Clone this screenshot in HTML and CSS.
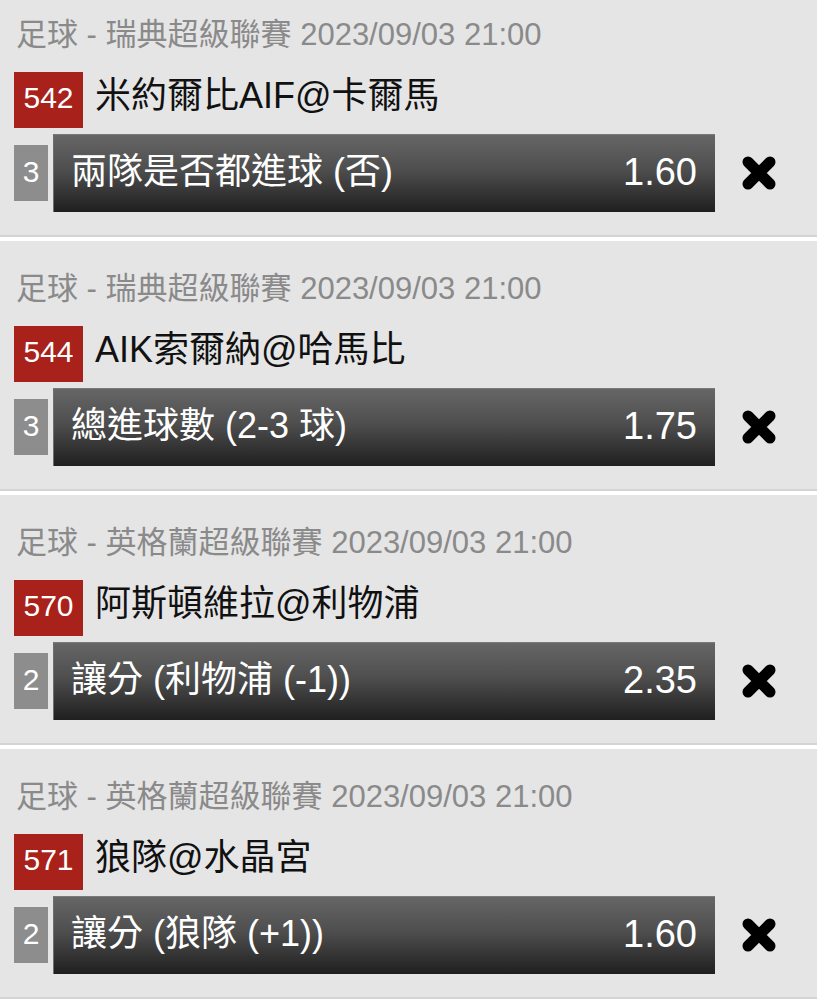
FILE: index.html
```html
<!DOCTYPE html>
<html lang="zh-Hant">
<head>
  <meta charset="UTF-8">
  <title>投注單</title>
  <link rel="stylesheet" href="styles.css">
</head>
<body>

  <div class="slip">

    <div class="bet">
      <div class="bet-head">足球 - 瑞典超級聯賽 2023/09/03 21:00</div>
      <div class="match">
        <span class="match-no">542</span>
        <span class="match-name">米約爾比AIF@卡爾馬</span>
      </div>
      <div class="pick">
        <span class="legs">3</span>
        <div class="pick-bar">
          <span class="pick-name">兩隊是否都進球 (否)</span>
          <span class="odds">1.60</span>
        </div>
        <button class="remove" aria-label="移除">
          <svg viewBox="0 0 36 36" width="36" height="36"><path d="M7 7 L29 29 M29 7 L7 29" /></svg>
        </button>
      </div>
    </div>

    <div class="bet">
      <div class="bet-head">足球 - 瑞典超級聯賽 2023/09/03 21:00</div>
      <div class="match">
        <span class="match-no">544</span>
        <span class="match-name">AIK索爾納@哈馬比</span>
      </div>
      <div class="pick">
        <span class="legs">3</span>
        <div class="pick-bar">
          <span class="pick-name">總進球數 (2-3 球)</span>
          <span class="odds">1.75</span>
        </div>
        <button class="remove" aria-label="移除">
          <svg viewBox="0 0 36 36" width="36" height="36"><path d="M7 7 L29 29 M29 7 L7 29" /></svg>
        </button>
      </div>
    </div>

    <div class="bet">
      <div class="bet-head">足球 - 英格蘭超級聯賽 2023/09/03 21:00</div>
      <div class="match">
        <span class="match-no">570</span>
        <span class="match-name">阿斯頓維拉@利物浦</span>
      </div>
      <div class="pick">
        <span class="legs">2</span>
        <div class="pick-bar">
          <span class="pick-name">讓分 (利物浦 (-1))</span>
          <span class="odds">2.35</span>
        </div>
        <button class="remove" aria-label="移除">
          <svg viewBox="0 0 36 36" width="36" height="36"><path d="M7 7 L29 29 M29 7 L7 29" /></svg>
        </button>
      </div>
    </div>

    <div class="bet">
      <div class="bet-head">足球 - 英格蘭超級聯賽 2023/09/03 21:00</div>
      <div class="match">
        <span class="match-no">571</span>
        <span class="match-name">狼隊@水晶宮</span>
      </div>
      <div class="pick">
        <span class="legs">2</span>
        <div class="pick-bar">
          <span class="pick-name">讓分 (狼隊 (+1))</span>
          <span class="odds">1.60</span>
        </div>
        <button class="remove" aria-label="移除">
          <svg viewBox="0 0 36 36" width="36" height="36"><path d="M7 7 L29 29 M29 7 L7 29" /></svg>
        </button>
      </div>
    </div>

  </div>

</body>
</html>
```

FILE: styles.css
```css
body {
  margin: 0;
  background: #fff;
  font-family: "Liberation Sans", "Noto Sans CJK TC", sans-serif;
}

.slip {
  width: 817px;
  margin-top: -13px;
}

.bet {
  background: #e5e5e6;
  border-bottom: 2px solid #d4d4d5;
  margin-bottom: 4px;
  padding: 30px 0 23px 14px;
}

.bet-head {
  color: #8a8a8a;
  font-size: 31px;
  line-height: 36px;
  padding-left: 2px;
  margin-bottom: 19px;
  white-space: nowrap;
}

.match {
  display: flex;
  align-items: center;
  height: 56px;
}

.match-no {
  background: #a8211a;
  color: #fff;
  width: 69px;
  height: 56px;
  line-height: 52px;
  text-align: center;
  font-size: 30px;
}

.match-name {
  color: #111;
  font-size: 36px;
  line-height: 40px;
  margin-left: 12px;
  margin-top: -8px;
}

.pick {
  display: flex;
  align-items: center;
  margin-top: 6px;
}

.legs {
  background: #8d8d8d;
  color: #fff;
  width: 34px;
  height: 56px;
  line-height: 54px;
  text-align: center;
  font-size: 30px;
}

.pick-bar {
  display: flex;
  align-items: center;
  justify-content: space-between;
  box-sizing: border-box;
  width: 662px;
  height: 78px;
  margin-left: 5px;
  padding: 0 18px 3px 17px;
  color: #fff;
  background: linear-gradient(#666 0%, #4e4e4e 45%, #1f1f1f 100%);
  border-top: 1px solid #7a7a7a;
  border-left: 1px solid #6e6e6e;
}

.pick-name {
  font-size: 36px;
  line-height: 40px;
}

.odds {
  font-size: 38px;
  line-height: 40px;
}

.remove {
  border: none;
  background: none;
  padding: 0;
  margin-left: 26px;
  width: 36px;
  height: 36px;
  cursor: pointer;
}

.remove svg {
  display: block;
}

.remove path {
  stroke: #000;
  stroke-width: 11;
  stroke-linecap: round;
  fill: none;
}
```
